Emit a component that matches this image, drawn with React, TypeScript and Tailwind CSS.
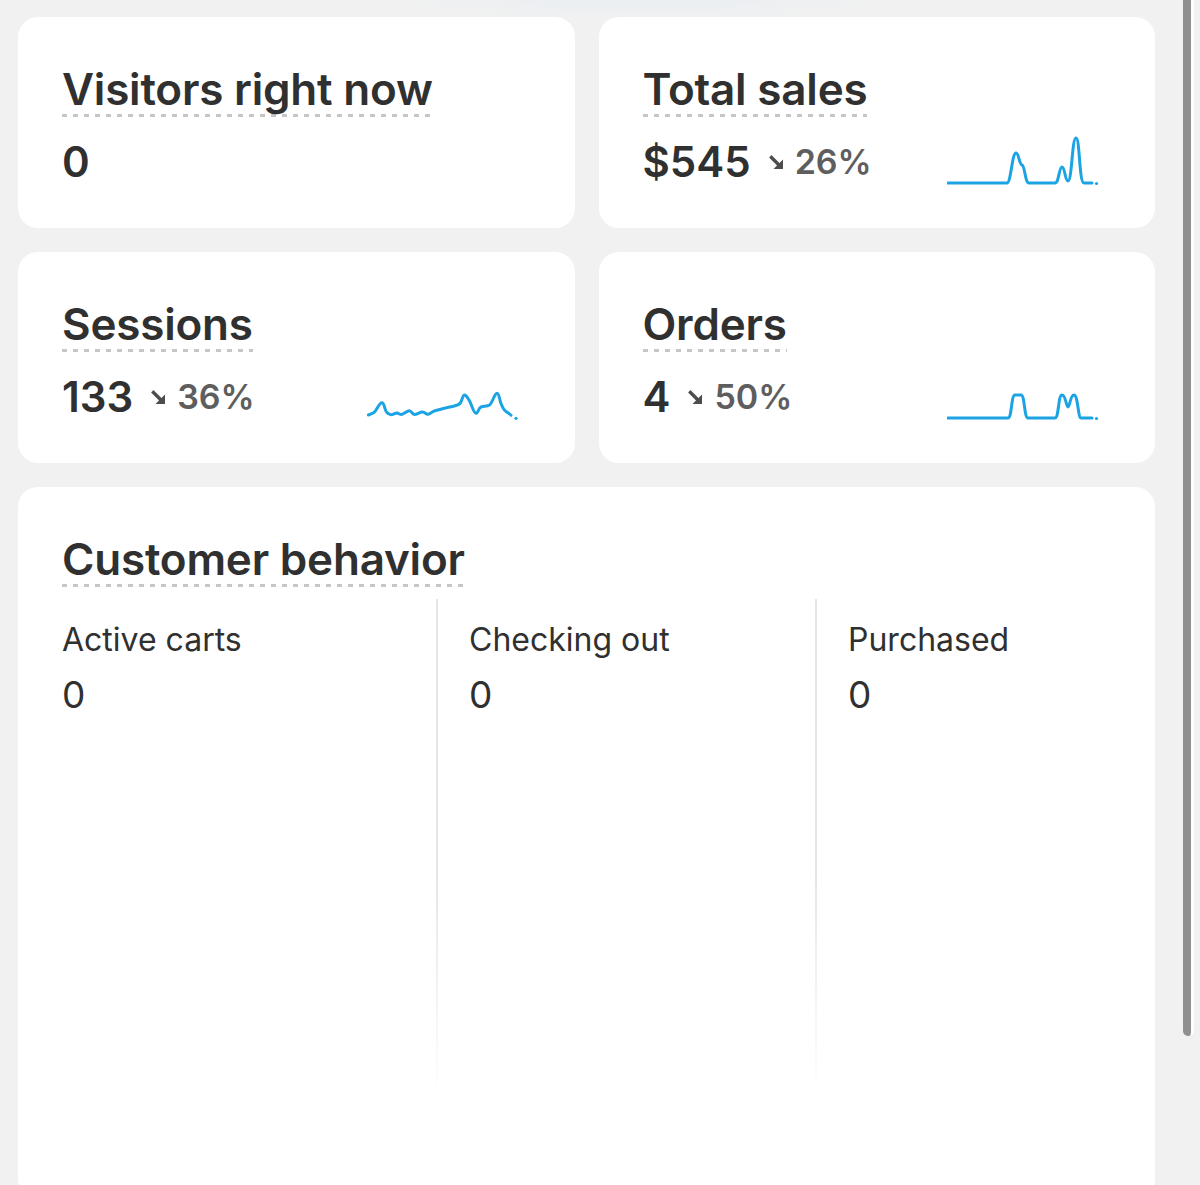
import React from "react";

const Arrow = () => (
  <svg width="15" height="15" viewBox="0 0 15 15" className="shrink-0">
    <path d="M2.5 2.5 L10 10" stroke="#4d4d4d" strokeWidth="3.4" strokeLinecap="square" />
    <path d="M14 4.5 V14 H4.5 Z" fill="#4d4d4d" />
  </svg>
);

const SPARK = "#1ba3e3";

const SalesSpark = () => (
  <svg width="152" height="60" viewBox="0 0 152 60" fill="none">
    <path
      d="M1 52 L60 52 C64 52 65 22 69 22 C72 22 72 33 75 34 C78 35 78 52 82 52 L108 52 C112 52 112 36 115 36 C118 36 118 50 121 50 C125 50 125 7 129 7 C133 7 132 52 137 52 L145 52"
      stroke={SPARK}
      strokeWidth="3"
      strokeLinecap="round"
      strokeLinejoin="round"
    />
    <circle cx="149.5" cy="52.5" r="1.6" fill={SPARK} />
  </svg>
);

const OrdersSpark = () => (
  <svg width="152" height="60" viewBox="0 0 152 60" fill="none">
    <path
      d="M1 52 L61 52 C65 52 64 29 68 29 L74 29 C78 29 77 52 81 52 L108 52 C112 52 111 29 115 29 C119 29 119 41 121 41 C123 41 123 29 127 29 C131 29 131 52 134 52 L145 52"
      stroke={SPARK}
      strokeWidth="3"
      strokeLinecap="round"
      strokeLinejoin="round"
    />
    <circle cx="149.5" cy="52.5" r="1.6" fill={SPARK} />
  </svg>
);

const SessionsSpark = () => (
  <svg width="152" height="60" viewBox="0 0 152 60" fill="none">
    <path
      d="M1.3 49 C4 48 5.5 47.5 7.3 46.2 C10 44 12 36.7 15 36.7 C17.5 36.7 17.5 44 19.5 46 C21.5 48.5 23 49 25 48.6 C27 48 28.5 46.8 30 47 C32 47.5 33 48.8 35 48.4 C37.5 47.8 40 44.8 42.3 44.8 C44.5 44.8 45.5 48.5 47.5 48.6 C50 48.6 53 45.8 55.7 46 C58 46.2 59 48.4 61 48.2 C63 48 65 45.6 67.3 45 C71 44 74 43 77.3 42.3 C80.5 41.5 84 40.8 87.3 40 C89.5 39.4 91.5 38.8 93 37.5 C95 35.5 95.5 29 97.5 29 C99.5 29 100.5 32 102.3 34.5 C104.5 38 106.5 47.3 109 47.3 C111 47.3 111.5 41.8 114 41 C117 40 120 40.5 122.5 39 C125.5 37 127.5 27.3 130 27.3 C132 27.3 132.5 33.5 134 37.5 C135.5 41.5 137 44.5 139.5 45.8 C141.5 46.8 142.8 48 144 49.2"
      stroke={SPARK}
      strokeWidth="3"
      strokeLinecap="round"
      strokeLinejoin="round"
    />
    <circle cx="149" cy="52.3" r="1.6" fill={SPARK} />
  </svg>
);

const Title = ({ children }: { children: React.ReactNode }) => (
  <div className="flex">
    <span className="inline-block pb-[3px] text-[44px] leading-[50px] font-semibold text-[#303030] tracking-[-0.2px] bg-[linear-gradient(to_right,#c6c6c6_0_5px,transparent_5px_11px)] bg-[length:11px_3px] bg-bottom-left bg-repeat-x whitespace-nowrap">
      {children}
    </span>
  </div>
);

function StatCard({
  title,
  value,
  pct,
  spark,
}: {
  title: string;
  value: string;
  pct?: string;
  spark?: React.ReactNode;
}) {
  return (
    <div className="h-[211px] rounded-[20px] bg-white pl-[44px] pr-[56px] pt-[47px]">
      <Title>{title}</Title>
      <div className="mt-[24px] flex items-start justify-between">
        <div className="flex items-center">
          <span className="text-[42px] leading-[42px] font-semibold text-[#303030]">{value}</span>
          {pct && (
            <span className="ml-[18px] flex items-center gap-[11px]">
              <Arrow />
              <span className="text-[34px] leading-[42px] font-semibold text-[#5e5e5e]">{pct}</span>
            </span>
          )}
        </div>
        {spark && <div className="-mt-[10px]">{spark}</div>}
      </div>
    </div>
  );
}

const Divider = () => (
  <div className="h-[500px] w-[2px] shrink-0 bg-[linear-gradient(to_bottom,#e6e6e6_55%,rgba(230,230,230,0))]" />
);

const Metric = ({ label, value }: { label: string; value: string }) => (
  <div className="pt-[21px]">
    <div className="text-[32px] leading-[40px] text-[#303030]">{label}</div>
    <div className="mt-[13px] text-[37px] leading-[44px] text-[#303030]">{value}</div>
  </div>
);

export default function App() {
  return (
    <div className="relative h-[1185px] w-[1200px] overflow-hidden bg-[#f1f1f1] font-['Inter','Noto_Sans',sans-serif]">
      <div className="pointer-events-none absolute left-[380px] top-0 h-[20px] w-[520px] bg-[radial-gradient(ellipse_at_top,#e9eef2,transparent_70%)]" />
      <div className="relative w-[1137px] ml-[18px] pt-[17px]">
        <div className="grid grid-cols-2 gap-[24px]">
          <StatCard title="Visitors right now" value="0" />
          <StatCard title="Total sales" value="$545" pct="26%" spark={<SalesSpark />} />
          <StatCard title="Sessions" value="133" pct="36%" spark={<SessionsSpark />} />
          <StatCard title="Orders" value="4" pct="50%" spark={<OrdersSpark />} />
        </div>
        <div className="mt-[24px] h-[712px] rounded-[20px] bg-white pl-[44px] pt-[47px]">
          <Title>Customer behavior</Title>
          <div className="mt-[12px] flex">
            <div className="w-[374px] shrink-0">
              <Metric label="Active carts" value="0" />
            </div>
            <Divider />
            <div className="w-[377px] shrink-0 pl-[31px]">
              <Metric label="Checking out" value="0" />
            </div>
            <Divider />
            <div className="pl-[31px]">
              <Metric label="Purchased" value="0" />
            </div>
          </div>
        </div>
      </div>
      <div className="absolute left-[1183px] top-0 h-[1036px] w-[11px] rounded-b-[5px] border-r-[3px] border-white bg-[#8f8f8f]" />
    </div>
  );
}
